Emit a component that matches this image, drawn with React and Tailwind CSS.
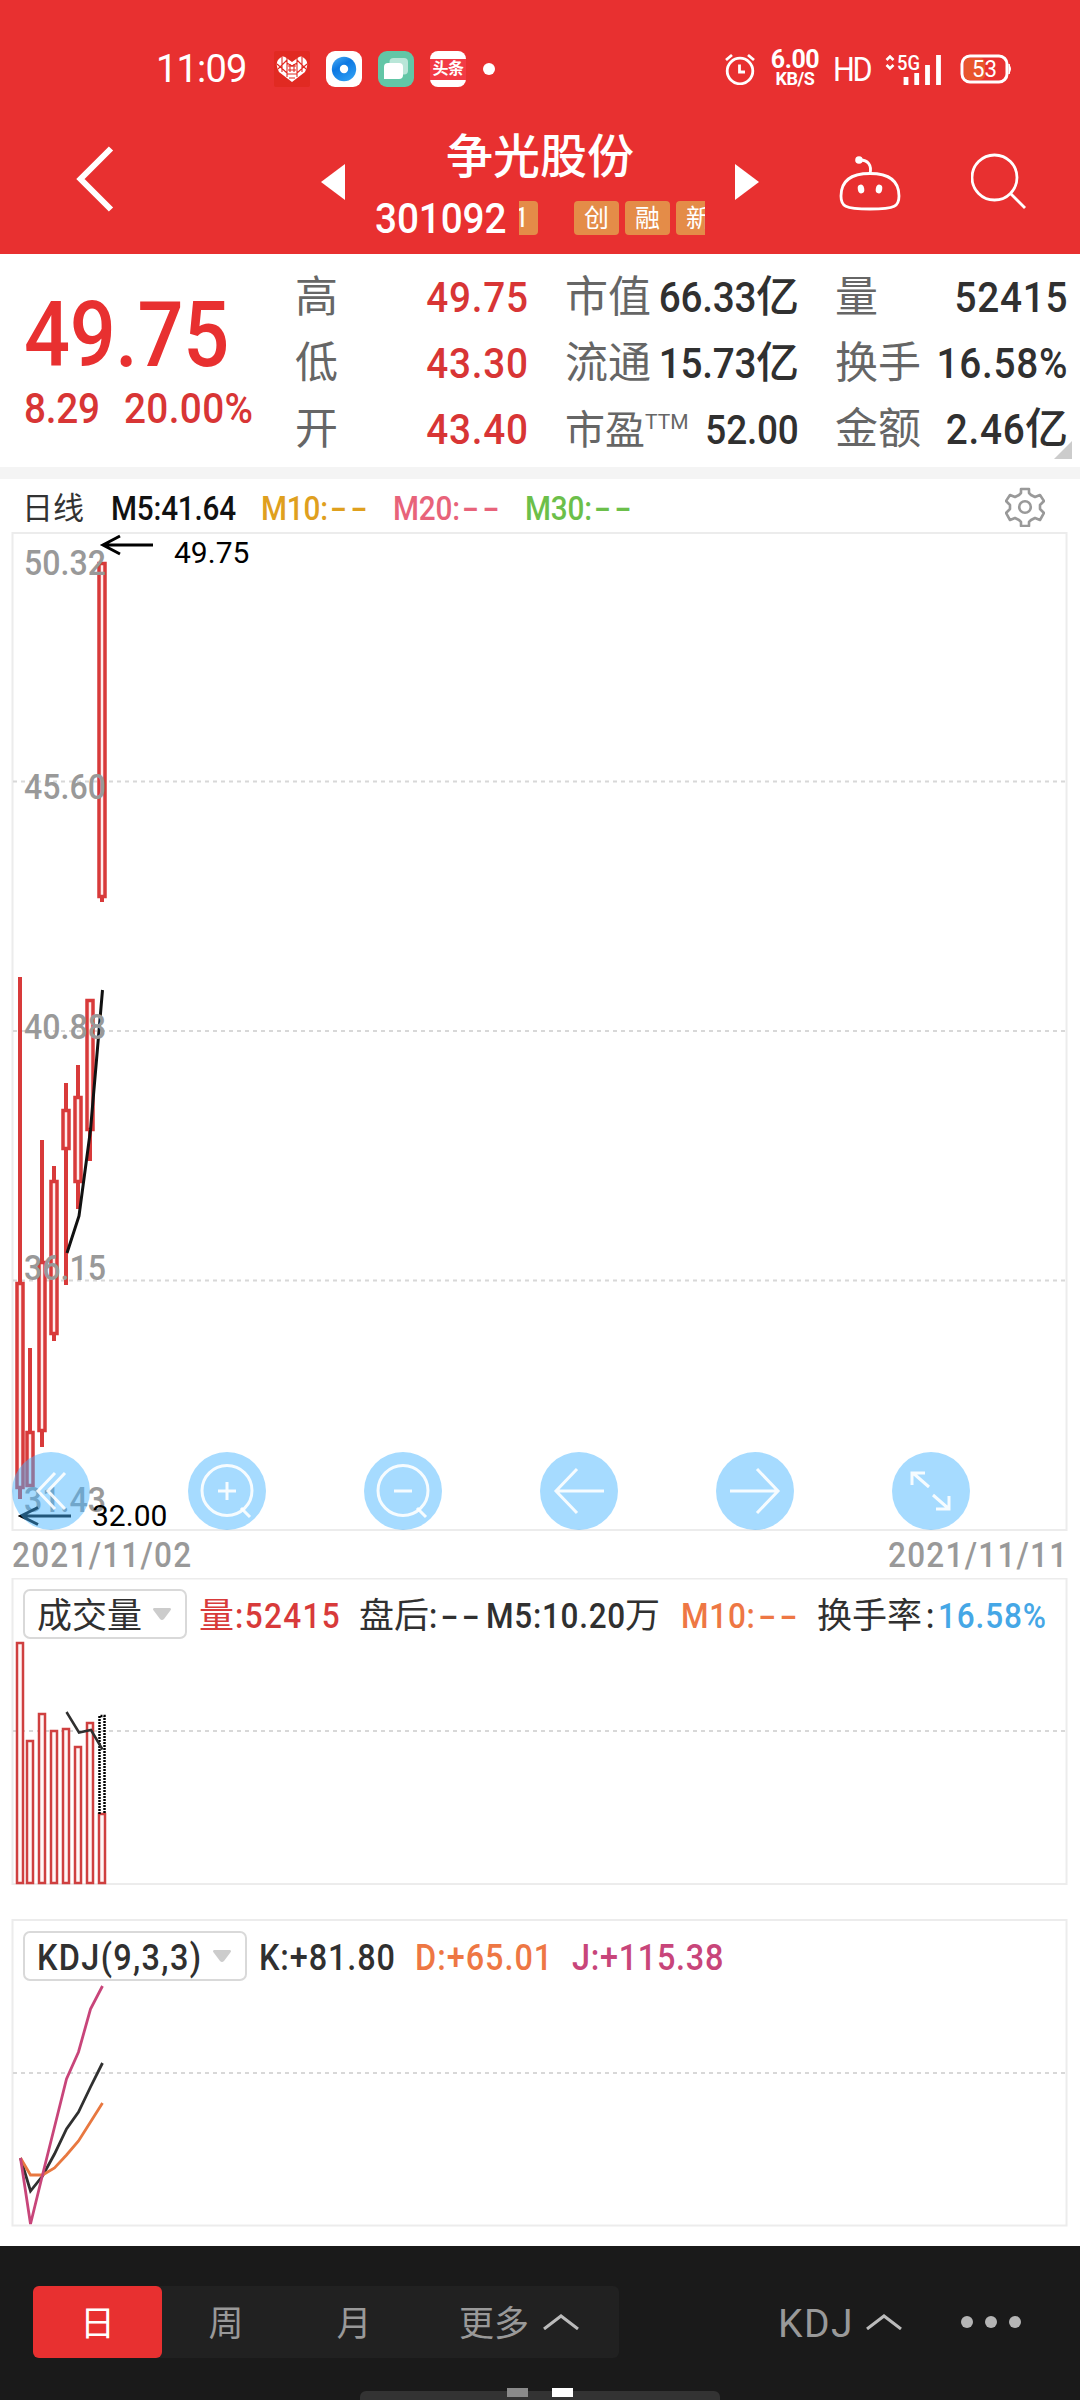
import React from 'react';
import clsx from 'clsx';

const xs = [20, 30, 42, 54, 66, 78, 90, 102];

// high, body top, body bottom, low
const candles = [
  [977, 1282, 1489, 1499],
  [1348, 1431, 1487, 1487],
  [1140, 1261, 1432, 1447],
  [1166, 1180, 1335, 1341],
  [1083, 1109, 1150, 1285],
  [1065, 1096, 1183, 1209],
  [999, 999, 1131, 1161],
  [562, 562, 898, 902],
];

const volumeTops = [1643, 1741, 1714, 1731, 1729, 1747, 1723, 1814];

const priceLabels = [
  ['50.32', 575],
  ['45.60', 799],
  ['40.88', 1039],
  ['36.15', 1280],
  ['31.43', 1512],
];

const toPoints = (ys) => ys.map((y, i) => `${xs[i] + 0.5},${y}`).join(' ');

// Condensed figures. The box keeps its full width, so the origin decides which edge holds.
const Num = ({ className, right, children }) => (
  <span className={clsx('inline-block scale-x-90 whitespace-nowrap leading-none', right ? 'origin-right' : 'origin-left', className)}>{children}</span>
);

const Dashes = () => (
  <span className="ml-[3px] inline-block origin-left scale-x-[1.65] tracking-[2.5px]">--</span>
);

const StatusBar = () => (
  <div className="flex h-[105px] items-center pt-[33px] pl-[156px] pr-[68px]">
    <span className="w-[118px] text-[38px] leading-none tracking-[-0.800px]">11:09</span>
    <div className="flex gap-4">
      <svg className="h-9 w-9" viewBox="0 0 36 36">
        <rect width="36" height="36" rx="2" fill="#e12a22" />
        <path d="M18 31 5 21Q1 13 4 9 8 4 11 6l7 5 7-5q3-2 7 3 3 4-1 12z" fill="#fff" />
        <path d="M8 6v15M13 7v19M23 7v19M28 6v15M3 13l10 9M33 13l-10 9M4 18l9-9M32 18l-9-9M13 23h10M15 27h6M13 12l5 3 5-3" stroke="#e12a22" strokeWidth="1.100" fill="none" />
        <path d="M14 15h8M14 19h8M16 13v8M20 13v8" stroke="#e12a22" strokeWidth="1.100" />
      </svg>
      <svg className="h-9 w-9" viewBox="0 0 36 36">
        <defs>
          <linearGradient id="swirl" x1="0" y1="0" x2="0.600" y2="1">
            <stop offset="0" stopColor="#4fb0f5" />
            <stop offset="0.450" stopColor="#0d78e2" />
            <stop offset="1" stopColor="#2b9bf2" />
          </linearGradient>
        </defs>
        <rect width="36" height="36" rx="9" fill="#fff" />
        <circle cx="18" cy="18" r="12.200" fill="url(#swirl)" />
        <circle cx="18" cy="18" r="4.200" fill="#fff" />
      </svg>
      <svg className="h-9 w-9" viewBox="0 0 36 36">
        <rect width="36" height="36" rx="9" fill="#62c6a6" />
        <rect x="11.500" y="7" width="18.500" height="16.500" rx="4" fill="#b9e6d8" />
        <path d="M10 12h11q4 0 4 4v8q0 4-4 4H6V16q0-4 4-4z" fill="#fff" />
      </svg>
      <div className="flex h-9 w-9 items-center rounded-[8px] bg-white">
        <div className="flex h-[21px] w-9 items-center justify-center bg-[#f23a45] text-[16px] font-bold leading-none tracking-[-0.500px]">头条</div>
      </div>
    </div>
    <div className="ml-[17px] h-3 w-3 rounded-full bg-white" />

    <div className="ml-auto flex items-center">
      <svg className="h-8 w-[30px]" viewBox="0 0 30 32" fill="none" stroke="#fff" strokeWidth="2.800">
        <circle cx="15" cy="18" r="12.800" />
        <path d="M14.500 11.500V19H20M1 7l6-5M29 7l-6-5" />
      </svg>
      <div className="ml-[15px] flex w-[50px] flex-col items-center font-bold">
        <span className="text-[25px] leading-[20px] tracking-[-0.500px]">6.00</span>
        <span className="text-[18px] leading-[18px] tracking-[-0.400px]">KB/S</span>
      </div>
      <Num className="ml-[13px] w-[52px] text-[34px] tracking-[-2.500px]">HD</Num>
      <svg className="h-8 w-[57px]" viewBox="0 0 57 32">
        <path d="M1.500 7 5 3.500 8.500 7M1.500 12 5 15.500 8.500 12" fill="none" stroke="#fff" strokeWidth="2.600" />
        <text x="12" y="17" fontSize="20" fontWeight="500" textLength="23" lengthAdjust="spacingAndGlyphs" fill="#fff">5G</text>
        <path d="M21 24v8M31.700 20v12M42.500 12v20M53.500 2v30" stroke="#fff" strokeWidth="4.800" />
      </svg>
      <svg className="ml-[18px] h-[30px] w-[52px]" viewBox="0 0 52 30">
        <rect x="2" y="2" width="45" height="26" rx="8" fill="none" stroke="#fff" strokeWidth="3" />
        <rect x="4" y="4" width="21" height="22" rx="5" fill="#e8552c" />
        <path d="M49 10q3 5 0 10z" fill="#fff" stroke="#fff" />
        <text x="12" y="22.500" fontSize="23" textLength="25" lengthAdjust="spacingAndGlyphs" fill="#fff">53</text>
      </svg>
    </div>
  </div>
);

const Tag = ({ children }) => (
  <span className="mr-[6px] flex h-[34px] w-[45px] shrink-0 items-center justify-center rounded-[4px] bg-[#e48c48] text-[25px] leading-none">{children}</span>
);

const NavBar = () => (
  <div className="flex h-[149px] pl-[74px]">
    <svg className="mt-[40px] h-[68px] w-10" viewBox="0 0 40 68" fill="none" stroke="#fff" strokeWidth="6">
      <path d="M37 3.500 6.500 34 37 64.500" />
    </svg>
    <svg className="ml-[207px] mt-[59px] h-9 w-6" viewBox="0 0 24 36"><path d="M0 18 24 0v36z" fill="#fff" /></svg>
    <div className="ml-[30px] flex w-[330px] flex-col">
      <div className="mt-[27px] text-center text-[47px] font-medium leading-[50px]">争光股份</div>
      <div className="mt-[19px] flex h-[34px] items-center">
        <Num className="w-[144px] text-[43px] font-medium tracking-[-0.100px]">301092</Num>
        <div className="flex w-[186px] overflow-hidden">
          <span className="mr-9 flex h-[34px] w-[19px] shrink-0 items-center rounded-r-[4px] bg-[#e48c48] text-[27px] leading-none -indent-[5px]">1</span>
          <Tag>创</Tag>
          <Tag>融</Tag>
          <Tag>新</Tag>
        </div>
      </div>
    </div>
    <svg className="ml-[30px] mt-[59px] h-9 w-6" viewBox="0 0 24 36"><path d="M24 18 0 0v36z" fill="#fff" /></svg>
    <svg className="ml-[80px] mt-[51px] h-[56px] w-[62px]" viewBox="0 0 62 56" fill="none" stroke="#fff" strokeWidth="2.800">
      <path d="M31 17.500C50 17.500 60 25 60 40c0 10-3 13-29 13S2 50 2 40C2 25 12 17.500 31 17.500z" />
      <path d="M31 17.500C33 9 29 4 21 4" />
      <circle cx="20" cy="4" r="3.800" fill="#fff" stroke="none" />
      <ellipse cx="22" cy="33" rx="3.200" ry="4.400" transform="rotate(-12 22 33)" fill="#fff" stroke="none" />
      <ellipse cx="40" cy="33" rx="3.200" ry="4.400" transform="rotate(12 40 33)" fill="#fff" stroke="none" />
    </svg>
    <svg className="ml-[70px] mt-[48px] h-[58px] w-[58px]" viewBox="0 0 58 58" fill="none" stroke="#fff" strokeWidth="2.800">
      <circle cx="23.500" cy="24.500" r="22.500" />
      <path d="M39 40 54 55" />
    </svg>
  </div>
);

const Stat = ({ label, value, unit, red, tight }) => (
  <div className={clsx('flex h-[66px] items-center text-[43px] font-medium leading-none', red ? 'text-[#d83535]' : 'text-[#303030]')}>
    <span className="mr-auto font-normal text-[#666]">{label}</span>
    <Num right className={clsx('-ml-5', tight ? 'tracking-[-0.300px]' : 'tracking-[0.800px]')}>{value}</Num>
    {unit ? <span>{unit}</span> : null}
  </div>
);

const Quote = () => (
  <div className="relative flex h-[213px] bg-white pl-[24px] pt-[10px]">
    <div className="w-[271px] text-[#e83030]">
      <div className="mt-[27px] flex h-[90px]"><Num className="text-[90px] font-medium tracking-[-0.400px]">49.75</Num></div>
      <div className="mt-[6px] flex text-[#d83535]">
        <Num className="w-[100px] text-[43px] font-medium tracking-[-0.300px]">8.29</Num>
        <Num className="text-[43px] font-medium tracking-[0.400px]">20.00%</Num>
      </div>
    </div>
    <div className="w-[234px]">
      <Stat label="高" value="49.75" red />
      <Stat label="低" value="43.30" red />
      <Stat label="开" value="43.40" red />
    </div>
    <div className="ml-[36px] w-[234px]">
      <Stat label="市值" value="66.33" unit="亿" tight />
      <Stat label="流通" value="15.73" unit="亿" tight />
      <Stat
        label={<span className="text-[40px]">市盈<sup className="relative -top-[15px] align-baseline text-[21px] leading-none">TTM</sup></span>}
        value={<span className="text-[41px] tracking-[-0.200px]">52.00</span>}
      />
    </div>
    <div className="ml-[36px] w-[233px]">
      <Stat label="量" value="52415" />
      <Stat label="换手" value="16.58%" />
      <Stat label="金额" value="2.46" unit="亿" />
    </div>
    <svg className="absolute bottom-2 right-2 h-[18px] w-[18px]" viewBox="0 0 18 18"><path d="M18 0v18H0z" fill="#ccc" /></svg>
  </div>
);

const Averages = () => (
  <div className="flex h-[53px] items-center bg-white pl-[22px] pt-[6px] text-[33px] font-medium">
    <span className="w-[89px] text-[31px] font-normal leading-none text-[#333]">日线</span>
    <Num className="w-[150px] tracking-[-0.200px] text-[#111]">M5:41.64</Num>
    <Num className="w-[132px] tracking-[-0.200px] text-[#dfa01e]">M10:<Dashes /></Num>
    <Num className="w-[132px] tracking-[-0.200px] text-[#e8637a]">M20:<Dashes /></Num>
    <Num className="tracking-[-0.200px] text-[#6cbf4a]">M30:<Dashes /></Num>
    <svg className="ml-auto mr-[35px] -mt-[4px] h-10 w-10" viewBox="0 0 40 40" fill="none" stroke="#999" strokeWidth="2.600" strokeLinejoin="round">
      <path d="M16 2h8v4l2 2 4 2 5-2 4 6-4 4v4l4 4-4 7-5-2-4 2-2 2v4h-8v-4l-2-2-4-2-5 2-4-7 4-4v-4l-4-4 4-6 5 2 4-2 2-2z" />
      <circle cx="20" cy="20" r="5.800" />
    </svg>
  </div>
);

const GridLine = ({ y }) => (
  <line x1="13" x2="1066" y1={y} y2={y} stroke="#d8d8d8" strokeWidth="2" strokeDasharray="4 4" />
);

const controls = [
  'M43 21 26 39 43 57M53 21 36 39 53 57',
  'M39 30v18M30 39h18M53 56l9 9',
  'M30 39h18M53 56l9 9',
  'M64 39H16M37 17 16 39 37 61',
  'M14 39H62M41 17 62 39 41 61',
  'M37 35 21 21M20 33V21h13M41 43 57 57M57 44v13H44',
];

const PriceChart = () => (
  <div className="relative bg-white">
    <svg className="block h-[999px] w-full" viewBox="0 532 1080 999" fontFamily="Roboto, sans-serif">
      <rect x="12.500" y="533" width="1054" height="997" fill="none" stroke="#ececec" strokeWidth="2" />
      <GridLine y={781.5} />
      <GridLine y={1031} />
      <GridLine y={1280.5} />
      {candles.map(([high, top, bottom, low], i) => (
        <g key={i} stroke="#d83a3a">
          <path d={`M${xs[i]} ${high}V${low}`} strokeWidth="4" />
          <rect x={xs[i] - 3} y={top + 1.5} width="6" height={bottom - top - 3} strokeWidth="3.500" fill="#ffecec" />
        </g>
      ))}
      <polyline points="67,1253 79,1216 90.500,1130 102.500,990" fill="none" stroke="#111" strokeWidth="3" />
      {priceLabels.map(([label, y]) => (
        <text key={label} x="24" y={y} fontSize="35" fontWeight="500" fill="#999" textLength="82" lengthAdjust="spacingAndGlyphs">{label}</text>
      ))}
      <path d="M103 545h50M120 536l-17 9 17 9M21 1516h50M38 1507.500l-17 8.500 17 8.500" fill="none" stroke="#000" strokeWidth="3" />
      <text x="174" y="563" fontSize="30">49.75</text>
      <text x="92" y="1526" fontSize="30">32.00</text>
    </svg>
    <div className="absolute bottom-[1px] left-3 flex gap-[98px]">
      {controls.map((d, i) => (
        <button key={d} className="h-[78px] w-[78px] rounded-full bg-[#44b4ff]/48">
          <svg viewBox="0 0 78 78" fill="none" stroke="#fff" strokeOpacity="0.900" strokeWidth="3">
            {i === 1 || i === 2 ? <circle cx="39" cy="38.500" r="25" /> : null}
            <path d={d} />
          </svg>
        </button>
      ))}
    </div>
  </div>
);

const Dropdown = ({ className, children }) => (
  <div className={clsx('flex h-[50px] shrink-0 items-center justify-between rounded-[7px] border-2 border-[#d9d9d9] bg-white pl-3 pr-[14px] text-[#303030]', className)}>
    {children}
    <svg className="h-3 w-[18px] shrink-0" viewBox="0 0 18 12"><path d="M1 0h16q2 1 0 3l-6 8q-2 2-4 0L1 3Q-1 1 1 0z" fill="#ccc" /></svg>
  </div>
);

const Volume = () => (
  <div className="relative h-[307px] bg-white">
    <svg className="block h-[307px] w-full" viewBox="0 1578 1080 307">
      <rect x="12.500" y="1578.500" width="1054" height="305.500" fill="none" stroke="#ececec" strokeWidth="2" />
      <GridLine y={1731} />
      {volumeTops.map((y, i) => (
        <rect key={i} x={xs[i] - 3} y={y} width="6" height={1883 - y} fill="#fff6f6" stroke="#cf4040" strokeWidth="2.500" />
      ))}
      <path d="M99.500 1814V1716h5v98" fill="none" stroke="#000" strokeWidth="2.500" strokeDasharray="2 1" />
      <polyline points="66.500,1712 79,1732.500 91,1730 102.500,1749.500" fill="none" stroke="#303030" strokeWidth="2.500" />
    </svg>
    <div className="absolute left-[23px] top-[11px] flex h-[50px] items-center text-[35px] font-medium leading-none text-[#303030]">
      <Dropdown className="w-[164px]"><span className="pt-[4px] font-normal">成交量</span></Dropdown>
      <div className="ml-[12px] flex w-[160px] pt-[4px] text-[#d83a3a]">
        <span className="mr-px font-normal">量</span>
        <Num className="tracking-[1.500px]">:52415</Num>
      </div>
      <div className="flex w-[127px] pt-[4px]">
        <span className="font-normal">盘后</span>
        <Num className="tracking-[0.500px]">:<Dashes /></Num>
      </div>
      <div className="flex w-[195px] pt-[4px]">
        <Num className="w-[139px] tracking-[0.800px]">M5:10.20</Num>
        <span className="font-normal">万</span>
      </div>
      <Num className="w-[136px] pt-[4px] tracking-[0.800px] text-[#ee7744]">M10:<Dashes /></Num>
      <div className="flex w-[121px] pt-[4px]">
        <span className="mr-1 font-normal">换手率</span>
        <Num>:</Num>
      </div>
      <Num className="pt-[4px] tracking-[1px] text-[#45a7e6]">16.58%</Num>
    </div>
  </div>
);

const Kdj = () => (
  <div className="relative mt-[34px] h-[308px] bg-white">
    <svg className="block h-[308px] w-full" viewBox="0 1919 1080 308" fill="none">
      <rect x="12.500" y="1920" width="1054" height="305.500" stroke="#ececec" strokeWidth="2" />
      <GridLine y={2073} />
      <g strokeWidth="2.800">
        <polyline points={toPoints([2158, 2191, 2176, 2154, 2129, 2112, 2087, 2063])} stroke="#303030" />
        <polyline points={toPoints([2158, 2175, 2175, 2168, 2155, 2141, 2122, 2103])} stroke="#e87840" />
        <polyline points={toPoints([2158, 2224, 2175, 2127, 2079, 2052, 2009, 1986])} stroke="#c8457a" />
      </g>
    </svg>
    <div className="absolute left-[23px] top-[12px] flex h-[50px] items-center text-[36px] font-medium text-[#303030]">
      <Dropdown className="w-[224px]"><Num className="w-0 pt-[3px] tracking-[1.500px]">KDJ(9,3,3)</Num></Dropdown>
      <Num className="ml-[12px] w-[156px] pt-[3px] tracking-[1.000px]">K:+81.80</Num>
      <Num className="w-[157px] pt-[3px] tracking-[1.100px] text-[#ee7744]">D:+65.01</Num>
      <Num className="pt-[3px] tracking-[0.800px] text-[#c8457a]">J:+115.38</Num>
    </div>
  </div>
);

const Caret = ({ className }) => (
  <svg className={clsx('h-4 w-9', className)} viewBox="0 0 36 16" fill="none" stroke="#bbb" strokeWidth="3"><path d="M1 15 18 2 35 15" /></svg>
);

const BottomBar = () => (
  <div className="relative flex h-[154px] bg-[#1a1a1a] pl-[33px] pt-10 text-[35px] leading-none text-[#999]">
    <div className="flex h-[72px] w-[586px] items-center rounded-[6px] bg-[#212121]">
      <div className="flex h-full w-[129px] items-center justify-center rounded-[6px] bg-[#e83030] pt-[4px] text-white">日</div>
      <div className="w-[128px] pt-[4px] text-center">周</div>
      <div className="w-[128px] pt-[4px] text-center">月</div>
      <div className="flex items-center pl-[41px]"><span className="pt-[4px]">更多</span><Caret className="ml-[14px]" /></div>
    </div>
    <div className="ml-[157px] flex h-[72px] items-center">
      <span className="w-[90px] pl-[2px] pt-[4px] text-[39px] tracking-[1.500px]">KDJ</span>
      <Caret />
      <div className="ml-[59px] flex gap-3">
        <i className="h-3 w-3 rounded-full bg-[#b5b5b5]" />
        <i className="h-3 w-3 rounded-full bg-[#b5b5b5]" />
        <i className="h-3 w-3 rounded-full bg-[#b5b5b5]" />
      </div>
    </div>
    <div className="absolute bottom-0 left-[360px] h-[9px] w-[360px] rounded-t-[6px] bg-[#333]" />
    <div className="absolute bottom-[3px] left-[507px] h-[9px] w-[21px] bg-[#8a8a8a]" />
    <div className="absolute bottom-[3px] left-[552px] h-[9px] w-[21px] bg-white" />
  </div>
);

export default function App() {
  return (
    <div className="flex h-[2400px] w-[1080px] flex-col overflow-hidden bg-white font-[Roboto,'Noto_Sans_CJK_SC',sans-serif]">
      <header className="h-[254px] bg-[#e83030] text-white">
        <StatusBar />
        <NavBar />
      </header>
      <Quote />
      <div className="h-3 bg-[#f4f4f4]" />
      <Averages />
      <PriceChart />
      <div className="flex h-[47px] items-center justify-between bg-white px-3 pt-[2px] text-[35px] font-medium text-[#999]">
        <Num className="tracking-[1.400px]">2021/11/02</Num>
        <Num right className="tracking-[1.400px]">2021/11/11</Num>
      </div>
      <Volume />
      <Kdj />
      <div className="mt-auto">
        <BottomBar />
      </div>
    </div>
  );
}
